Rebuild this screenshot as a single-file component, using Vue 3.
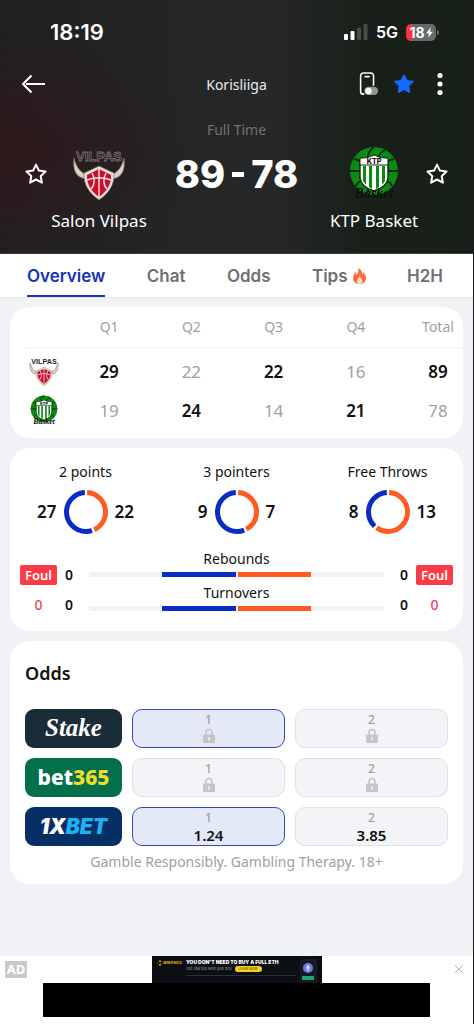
<template>
  <div class="match-page">
    <svg class="symbols" aria-hidden="true">
      <symbol id="logo-vilpas" viewBox="0 0 54 54">
        <path
          d="M2 12c-1 9 0 17 8 20l8 2 1-5c-8 0-14-5-17-17zM52 12c1 9 0 17-8 20l-8 2-1-5c8 0 14-5 17-17z"
          fill="#d9d2c2"
          stroke="#6d675c"
          stroke-width="0.8"
        />
        <path d="M27 20l15 7c1 12-6 21-15 27-9-6-16-15-15-27z" fill="#e4ddd2" stroke="#6d5a55" stroke-width="0.6" />
        <path d="M27 23l12 6c1 9-5 17-12 22-7-5-13-13-12-22z" fill="#c8102e" />
        <path
          d="M27 23v28M15 34c8-3 16-3 24 0M20 27c3 5 3 12-1 16M34 27c-3 5-3 12 1 16"
          fill="none"
          stroke="#f2e6e2"
          stroke-width="1.4"
        />
      </symbol>
      <symbol id="logo-ktp" viewBox="0 0 54 54">
        <circle cx="27" cy="25" r="24" fill="#0d8a12" />
        <path
          d="M3 25h11M40 25h11M27 1c-4 3-6 6-6 10M38 4c-4 2-6 5-7 8M7 13c5 1 8 3 10 6M47 13c-5 1-8 3-10 6M9 40c2-4 5-6 9-6M45 40c-2-4-5-6-9-6M20 48c0-3 2-6 4-8"
          fill="none"
          stroke="#0a2a0d"
          stroke-width="1.8"
        />
        <path d="M13 14q7 1 14-4 7 5 14 4v18q-1 9-14 13-13-4-14-13z" fill="#fff" stroke="#0a2a0d" stroke-width="1.4" />
        <path d="M16 20h3v19l-3-4zM22 20h3v23l-3-2zM29 20h3v21l-3 2zM35 20h3v15l-3 4z" fill="#0d8a12" />
        <path d="M13 12q7 1 14-3 7 4 14 3v7H13z" fill="#fff" stroke="#0a2a0d" stroke-width="1" />
      </symbol>
      <symbol id="icon-star" viewBox="0 0 24 24">
        <path
          d="M12 2.6l2.9 6 6.6.9-4.8 4.6 1.2 6.6L12 17.5l-5.9 3.2 1.2-6.6L2.5 9.500l6.600-.9z"
          stroke-width="2"
          stroke-linejoin="round"
        />
      </symbol>
      <symbol id="icon-lock" viewBox="0 0 12 16">
        <path d="M3 7V4.500a3 3 0 0 1 6 0V7" fill="none" stroke="#c5c5c8" stroke-width="1.6" />
        <rect x="0" y="6.500" width="12" height="8.500" rx="1" fill="#c5c5c8" />
        <path d="M6 9v3.500" stroke="#f3f4f8" stroke-width="1.500" />
      </symbol>
    </svg>

    <header class="header">
      <div class="status-bar">
        <span class="time">18:19</span>
        <div class="status-icons">
          <svg class="signal" viewBox="0 0 24 16" aria-hidden="true">
            <rect x="0" y="10" width="4" height="6" rx="1" fill="#fff" />
            <rect x="6.500" y="7" width="4" height="9" rx="1" fill="#fff" />
            <rect x="13" y="3.500" width="4" height="12.500" rx="1" fill="#4a4b4a" />
            <rect x="19.500" y="0" width="4" height="16" rx="1" fill="#4a4b4a" />
          </svg>
          <span class="network">5G</span>
          <div class="battery">
            <span>18</span>
            <svg viewBox="0 0 8 12" aria-hidden="true"><path d="M5.500 0L0 7h3.500L2.500 12 8 5H4.500z" fill="#fff" /></svg>
          </div>
          <i class="battery-nub"></i>
        </div>
      </div>

      <nav class="top-nav">
        <button class="icon-btn" aria-label="Back">
          <svg viewBox="0 0 24 24">
            <path d="M9.500 3.500L1 12l8.500 8.500M4 12h19" fill="none" stroke="#fff" stroke-width="2" />
          </svg>
        </button>
        <h1>Korisliiga</h1>
        <div class="nav-actions">
          <button class="icon-btn" aria-label="Live widget">
            <svg viewBox="0 0 22 26">
              <path
                d="M17 15V4a3 3 0 0 0-3-3H6a3 3 0 0 0-3 3v17a3 3 0 0 0 3 3h1"
                fill="none"
                stroke="#fff"
                stroke-width="1.700"
              />
              <path d="M8 5h4" stroke="#fff" stroke-width="2" stroke-linecap="round" />
              <rect x="7" y="16" width="15" height="9" rx="4.500" fill="#929492" />
              <circle cx="11.500" cy="20.500" r="3.500" fill="#fff" />
            </svg>
          </button>
          <button class="icon-btn favorite" aria-label="Favorite match">
            <svg><use href="#icon-star" /></svg>
          </button>
          <button class="icon-btn" aria-label="More">
            <svg viewBox="0 0 22 24" fill="#fff">
              <circle cx="11" cy="3.500" r="2.600" />
              <circle cx="11" cy="12" r="2.600" />
              <circle cx="11" cy="20.500" r="2.600" />
            </svg>
          </button>
        </div>
      </nav>

      <p class="match-status">Full Time</p>

      <div class="scoreboard">
        <button class="icon-btn follow" aria-label="Follow Salon Vilpas">
          <svg><use href="#icon-star" /></svg>
        </button>
        <div class="team">
          <svg class="team-logo vilpas-dark" viewBox="0 0 54 54">
            <use href="#logo-vilpas" />
            <text class="vilpas-text" x="27" y="15" text-anchor="middle">VILPAS</text>
          </svg>
          <span>Salon Vilpas</span>
        </div>
        <div class="score"><span>89</span><i></i><span>78</span></div>
        <div class="team">
          <svg class="team-logo" viewBox="0 0 54 54">
            <use href="#logo-ktp" />
            <text class="ktp-text" x="27" y="18" text-anchor="middle">KTP</text>
            <text class="ktp-basket" x="27" y="52" text-anchor="middle">Basket</text>
          </svg>
          <span>KTP Basket</span>
        </div>
        <button class="icon-btn follow" aria-label="Follow KTP Basket">
          <svg><use href="#icon-star" /></svg>
        </button>
      </div>
    </header>

    <nav class="tabs">
      <button
        v-for="tab in tabs"
        :key="tab"
        :class="{ active: tab === activeTab }"
        @click="activeTab = tab"
      >
        {{ tab }}
        <svg v-if="tab === 'Tips'" class="fire" viewBox="0 0 14 17" aria-hidden="true">
          <path
            d="M6 0c4 3 4 5 4 7 1-1 1-2 1-3 2 3 3 5 3 7 0 4-3 6-7 6s-7-2-7-6c0-3 2-4 2-7 1 1 2 2 2 4C5 6 6 4 6 0z"
            fill="#ff6a45"
          />
          <path d="M7 9c2 2 3 3 3 5s-1 3-3 3-3-1-3-3 2-3 3-5z" fill="#ffe0b0" />
        </svg>
      </button>
    </nav>

    <main class="content">
      <section class="card quarters">
        <table>
          <thead>
            <tr>
              <th class="logo-col"></th>
              <th v-for="q in ['Q1', 'Q2', 'Q3', 'Q4']" :key="q">{{ q }}</th>
              <th class="total-col">Total</th>
            </tr>
          </thead>
          <tbody>
            <tr v-for="row in quarterRows" :key="row.team">
              <td class="logo-col">
                <svg v-if="row.team === 'vilpas'" class="small-logo" viewBox="0 0 54 54">
                  <use href="#logo-vilpas" />
                  <text class="vilpas-text" x="27" y="15" text-anchor="middle">VILPAS</text>
                </svg>
                <svg v-else class="small-logo" viewBox="0 0 54 54">
                  <use href="#logo-ktp" />
                  <text class="ktp-text" x="27" y="18" text-anchor="middle">KTP</text>
                  <text class="ktp-basket" x="27" y="52" text-anchor="middle">Basket</text>
                </svg>
              </td>
              <td
                v-for="(cell, i) in row.cells"
                :key="i"
                :class="{ win: cell.win, 'total-col': i === 4 }"
              >
                {{ cell.value }}
              </td>
            </tr>
          </tbody>
        </table>
      </section>

      <section class="card stats">
        <div class="donuts">
          <div v-for="stat in shooting" :key="stat.label" class="donut-stat">
            <h3>{{ stat.label }}</h3>
            <div class="donut-row">
              <span class="left">{{ stat.home }}</span>
              <svg viewBox="0 0 44 44" class="donut" aria-hidden="true">
                <circle
                  cx="22"
                  cy="22"
                  r="19.500"
                  pathLength="100"
                  stroke="#ff5a1f"
                  :stroke-dasharray="`${share(stat) - 2} 100`"
                  stroke-dashoffset="-1"
                />
                <circle
                  cx="22"
                  cy="22"
                  r="19.500"
                  pathLength="100"
                  stroke="#0a2bc4"
                  :stroke-dasharray="`${98 - share(stat)} 100`"
                  :stroke-dashoffset="-share(stat) - 1"
                />
              </svg>
              <span>{{ stat.away }}</span>
            </div>
          </div>
        </div>

        <div class="compare">
          <div class="side">
            <span class="foul">Foul</span>
            <span class="foul-count">0</span>
          </div>
          <div class="side">
            <span>0</span>
            <span>0</span>
          </div>
          <div class="bars">
            <template v-for="label in ['Rebounds', 'Turnovers']" :key="label">
              <span class="bar-label">{{ label }}</span>
              <div class="bar"><i class="home"></i><i class="away"></i></div>
            </template>
          </div>
          <div class="side">
            <span>0</span>
            <span>0</span>
          </div>
          <div class="side">
            <span class="foul">Foul</span>
            <span class="foul-count">0</span>
          </div>
        </div>
      </section>

      <section class="card odds">
        <h2>Odds</h2>
        <div v-for="book in books" :key="book.id" class="odds-row">
          <a href="#" class="book" :class="book.id">
            <span v-for="part in book.name" :key="part">{{ part }}</span>
          </a>
          <button
            v-for="(odd, i) in book.odds"
            :key="i"
            class="odd"
            :class="{ selected: book.selected && i === 0 }"
          >
            <small>{{ i + 1 }}</small>
            <b v-if="odd">{{ odd }}</b>
            <svg v-else class="lock"><use href="#icon-lock" /></svg>
          </button>
        </div>
        <p class="notice">Gamble Responsibly. Gambling Therapy. 18+</p>
      </section>
    </main>

    <aside class="ad">
      <span class="ad-tag">AD</span>
      <div class="ad-body">
        <a href="#" class="banner">
          <span class="brand">
            <svg viewBox="0 0 10 10" aria-hidden="true">
              <path d="M5 0l2.500 2.500-1 1L5 2 3.500 3.500l-1-1zM5 10L2.500 7.500l1-1L5 8l1.500-1.500 1 1zM0 5l1-1 1 1-1 1zM8 5l1-1 1 1-1 1zM5 4l1 1-1 1-1-1z" fill="#f0b90b" />
            </svg>
            BINANCE
          </span>
          <span class="pitch">
            <strong>YOU DON'T NEED TO BUY A FULL ETH</strong>
            <span class="pitch-sub">Get started with just $10 <em>LEARN MORE</em></span>
            <i class="rule"></i>
          </span>
          <span class="coin">
            <svg viewBox="0 0 10 10" aria-hidden="true">
              <circle cx="5" cy="5" r="5" fill="#6f7de0" />
              <path d="M5 1.500L7 5 5 6.200 3 5zM5 8.500L3 5.700l2 1.200 2-1.200z" fill="#dfe3ff" />
            </svg>
            <i></i>
          </span>
        </a>
        <div class="ad-block"></div>
      </div>
      <button class="ad-close" aria-label="Close ad">
        <svg viewBox="0 0 10 10"><path d="M1 1l8 8M9 1L1 9" stroke="#b4b4b4" stroke-width="1" /></svg>
      </button>
    </aside>
  </div>
</template>

<script setup>
import { ref } from 'vue'

const tabs = ['Overview', 'Chat', 'Odds', 'Tips', 'H2H']
const activeTab = ref('Overview')

const home = [29, 22, 22, 16, 89]
const away = [19, 24, 14, 21, 78]

// mark the better score of each period
const compareScores = (own, other) => {
  return own.map((value, i) => ({ value, win: value > other[i] }))
}

const quarterRows = [
  { team: 'vilpas', cells: compareScores(home, away) },
  { team: 'ktp', cells: compareScores(away, home) }
]

const shooting = [
  { label: '2 points', home: 27, away: 22 },
  { label: '3 pointers', home: 9, away: 7 },
  { label: 'Free Throws', home: 8, away: 13 }
]

// away team's part of the ring, in percent
const share = (stat) => Math.floor((stat.away / (stat.home + stat.away)) * 100)

const books = [
  { id: 'stake', name: ['Stake'], selected: true, odds: [null, null] },
  { id: 'bet365', name: ['bet', '365'], selected: false, odds: [null, null] },
  { id: 'xbet', name: ['1X', 'BET'], selected: true, odds: ['1.24', '3.85'] }
]
</script>

<style>
body {
  margin: 0;
  background: #f1f2f6;
}
</style>

<style scoped>
.match-page {
  box-sizing: border-box;
  min-height: 100vh;
  display: flex;
  flex-direction: column;
  border-right: 1px solid #1d1d20;
  background: #f1f2f6;
  color: #111;
  font-family: 'Noto Sans', 'Open Sans', sans-serif;
  font-size: 14px;
}

.match-page * {
  box-sizing: border-box;
}

button {
  padding: 0;
  border: none;
  background: none;
  font-family: inherit;
  cursor: pointer;
}

h1,
h2,
h3,
p {
  margin: 0;
  font-weight: 400;
}

a {
  text-decoration: none;
}

svg {
  display: block;
}

.symbols {
  position: absolute;
  width: 0;
  height: 0;
}

.vilpas-text {
  font: 700 13px 'Liberation Sans', sans-serif;
  fill: #222;
}

.ktp-text {
  font: 800 7px Inter, sans-serif;
  fill: #111;
}

.ktp-basket {
  font: italic 700 14px 'Liberation Serif', serif;
  fill: #0a120b;
}

/* Header */
.header {
  height: 254px;
  color: #fff;
  border-bottom: 1px solid #3d3b3c;
  background:
    radial-gradient(ellipse 200px 120px at 0 150px, #2f181c 0%, rgba(47, 24, 28, 0) 100%),
    linear-gradient(90deg, #202020 0%, #252628 45%, #262727 58%, #182019 78%, #172018 100%);
}

.status-bar {
  height: 64px;
  padding: 0 34px 0 50px;
  display: flex;
  align-items: center;
  justify-content: space-between;
  font-family: Inter, sans-serif;
}

.time {
  font-size: 22px;
  font-weight: 600;
}

.status-icons {
  display: flex;
  align-items: center;
  gap: 8px;
}

.signal {
  width: 24px;
  height: 16px;
}

.network {
  font-size: 16px;
  font-weight: 600;
}

.battery {
  width: 30px;
  height: 17px;
  display: flex;
  align-items: center;
  justify-content: center;
  gap: 1px;
  border-radius: 5px;
  background: linear-gradient(90deg, #ff3040 20%, #676a68 20%);
  font-size: 14px;
  font-weight: 700;
}

.battery svg {
  width: 7px;
  height: 11px;
}

.battery-nub {
  width: 2px;
  height: 5px;
  margin-left: -7px;
  border-radius: 0 2px 2px 0;
  background: #676a68;
}

.top-nav {
  height: 40px;
  padding: 0 22px;
  display: grid;
  grid-template-columns: 1fr auto 1fr;
  align-items: center;
}

.top-nav h1 {
  font-size: 14px;
  color: #ececec;
}

.nav-actions {
  display: flex;
  justify-content: flex-end;
  gap: 14px;
}

.icon-btn {
  width: 24px;
  height: 24px;
}

.nav-actions .icon-btn {
  width: 22px;
}

.icon-btn svg {
  width: 100%;
  height: 100%;
}

.favorite {
  fill: #1769ff;
  stroke: #1769ff;
}

.follow {
  fill: none;
  stroke: #fff;
}

.match-status {
  margin-top: 16px;
  line-height: 20px;
  text-align: center;
  color: #727272;
}

.scoreboard {
  margin-top: 6px;
  padding: 0 24px;
  display: flex;
  justify-content: space-between;
}

.scoreboard .follow {
  margin-top: 16px;
}

.team {
  width: 102px;
  display: flex;
  flex-direction: column;
  align-items: center;
  gap: 10px;
  line-height: 22px;
  font-size: 17px;
  white-space: nowrap;
}

.team-logo {
  width: 54px;
  height: 54px;
}

.vilpas-dark .vilpas-text {
  fill: #241c1d;
  stroke: #777273;
  stroke-width: 0.8px;
}

.score {
  flex: 1;
  height: 56px;
  display: flex;
  align-items: center;
  justify-content: center;
  gap: 7px;
  font-family: Inter, sans-serif;
  font-size: 38px;
  font-weight: 800;
}

.score i {
  width: 12px;
  height: 5px;
  background: #fff;
}

/* Tabs */
.tabs {
  height: 44px;
  padding: 0 30px 0 27px;
  display: flex;
  justify-content: space-between;
  border-bottom: 1px solid #e6e7ea;
  background: #fff;
}

.tabs button {
  display: flex;
  align-items: center;
  gap: 5px;
  border-top: 2px solid transparent;
  border-bottom: 2px solid transparent;
  color: #707070;
  font-family: Inter, sans-serif;
  font-size: 17px;
  font-weight: 600;
}

.tabs button.active {
  color: #1733b8;
  border-bottom-color: #1733b8;
}

.fire {
  width: 13px;
  height: 16px;
}

/* Cards */
.content {
  padding: 9px 10px;
  display: flex;
  flex-direction: column;
  gap: 10px;
}

.card {
  border-radius: 20px;
  background: #fff;
}

.quarters {
  padding: 0 0 8px 15px;
}

table {
  width: 100%;
  table-layout: fixed;
  border-collapse: collapse;
}

th {
  height: 40px;
  padding: 0;
  border-bottom: 1px solid #f3f3f5;
  color: #a0a0a0;
  font-weight: 400;
}

td {
  height: 39px;
  padding: 0;
  text-align: center;
  color: #a0a0a0;
  font-size: 17px;
}

tbody::before {
  content: '';
  display: block;
  height: 4px;
}

td.win {
  color: #111;
  font-weight: 600;
}

.logo-col {
  width: 43px;
}

.total-col {
  width: 66px;
  padding-left: 16px;
}

.small-logo {
  width: 30px;
  height: 30px;
  margin-left: 4px;
}

.stats {
  padding: 14px 10px 13px;
}

.donuts {
  margin: 0 -10px;
  display: grid;
  grid-template-columns: repeat(3, 1fr);
}

.donut-stat h3 {
  line-height: 20px;
  font-size: 14px;
  text-align: center;
}

.donut-row {
  margin-top: 8px;
  display: grid;
  grid-template-columns: 1fr 44px 1fr;
  align-items: center;
  gap: 7px;
  font-size: 17px;
  font-weight: 600;
}

.donut-row .left {
  text-align: right;
}

.donut {
  width: 44px;
  height: 44px;
}

.donut circle {
  fill: none;
  stroke-width: 5;
  transform: rotate(-90deg);
  transform-origin: center;
}

.compare {
  margin-top: 16px;
  display: grid;
  grid-template-columns: 37px 24px 1fr 24px 37px;
}

.side {
  padding-top: 15px;
  display: flex;
  flex-direction: column;
  gap: 10px;
  line-height: 20px;
  text-align: center;
  font-weight: 600;
}

.foul {
  border-radius: 2px;
  background: #fb3b45;
  color: #fff;
  font-size: 13px;
}

.foul-count {
  color: #ee4a52;
  font-weight: 500;
}

.bars {
  padding: 0 8px;
}

.bar-label {
  display: block;
  line-height: 18px;
  text-align: center;
}

.bar {
  height: 5px;
  margin: 4px 0 7px;
  display: flex;
  justify-content: center;
  gap: 2px;
  background: #f2f3f7;
}

.bar i {
  width: 25%;
}

.bar .home {
  background: #0a2bc4;
}

.bar .away {
  background: #ff5a1f;
}

/* Odds */
.odds {
  padding: 20px 15px 12px;
}

.odds h2 {
  margin-bottom: 24px;
  line-height: 24px;
  font-size: 18px;
  font-weight: 600;
}

.odds-row {
  height: 39px;
  margin-bottom: 10px;
  display: grid;
  grid-template-columns: 97px 1fr 1fr;
  gap: 10px;
}

.book {
  display: flex;
  align-items: center;
  justify-content: center;
  border-radius: 9px;
  color: #fff;
}

.stake {
  background: #1a2c38;
  font: italic 700 25px 'Liberation Serif', serif;
}

.bet365 {
  background: #03704b;
  font-size: 21px;
  font-weight: 800;
}

.bet365 span + span {
  color: #f2dc2e;
}

.xbet {
  background: #062f66;
  font: italic 900 21px Inter, sans-serif;
}

.xbet span + span {
  color: #1cb2f5;
}

.odd {
  display: flex;
  flex-direction: column;
  align-items: center;
  padding-top: 2px;
  border: 1px solid #e0e1e5;
  border-radius: 10px;
  background: #f3f4f8;
  color: #111;
}

.odd.selected {
  border-color: #3048c0;
  background: #e3e9f7;
}

.odd small {
  line-height: 16px;
  font-size: 12px;
  font-weight: 500;
  color: #a0a0a0;
}

.odd b {
  line-height: 18px;
  font-size: 15px;
  font-weight: 600;
}

.lock {
  width: 12px;
  height: 16px;
}

.notice {
  margin-top: -4px;
  line-height: 20px;
  text-align: center;
  color: #a0a0a0;
}

/* Ad */
.ad {
  height: 68px;
  margin-top: auto;
  padding: 0 5px;
  display: grid;
  grid-template-columns: 38px 1fr 38px;
  align-items: start;
  background: #fff;
}

.ad-tag {
  width: 22px;
  height: 17px;
  margin-top: 5px;
  background: #c9c9c9;
  color: #fff;
  line-height: 17px;
  text-align: center;
  font-size: 13px;
  font-weight: 700;
}

.banner {
  width: 170px;
  height: 27px;
  margin: 0 auto;
  padding: 3px 5px 0;
  display: flex;
  gap: 4px;
  overflow: hidden;
  background: #0b0e13;
  color: #fff;
  white-space: nowrap;
  font-family: Inter, sans-serif;
}

.brand {
  display: flex;
  align-items: center;
  gap: 1px;
  height: 7px;
  color: #d9a70c;
  font-size: 4px;
  font-weight: 800;
}

.brand svg {
  width: 6px;
  height: 6px;
}

.pitch {
  flex: 1;
}

.pitch strong {
  display: block;
  line-height: 7px;
  font-size: 5px;
  font-weight: 900;
}

.pitch-sub {
  display: flex;
  justify-content: space-between;
  line-height: 6px;
  width: 76px;
  color: #9a9da2;
  font-size: 4px;
}

.pitch em {
  padding: 0 4px;
  border-radius: 3px;
  background: #f5d020;
  color: #4a3d05;
  font-size: 3px;
  font-style: normal;
}

.rule {
  display: block;
  height: 1px;
  margin-top: 3px;
  background: #2b2f35;
}

.coin {
  width: 17px;
  height: 24px;
  padding-top: 4px;
  display: flex;
  flex-direction: column;
  align-items: center;
  gap: 3px;
  background: #171a22;
}

.coin svg {
  width: 10px;
  height: 10px;
}

.coin i {
  width: 12px;
  height: 4px;
  background: #1fa56f;
}

.ad-block {
  height: 34px;
  background: #000;
}

.ad-close {
  width: 10px;
  height: 10px;
  margin: 8px 4px 0 0;
  justify-self: end;
}

.ad-close svg {
  width: 10px;
  height: 10px;
}
</style>
